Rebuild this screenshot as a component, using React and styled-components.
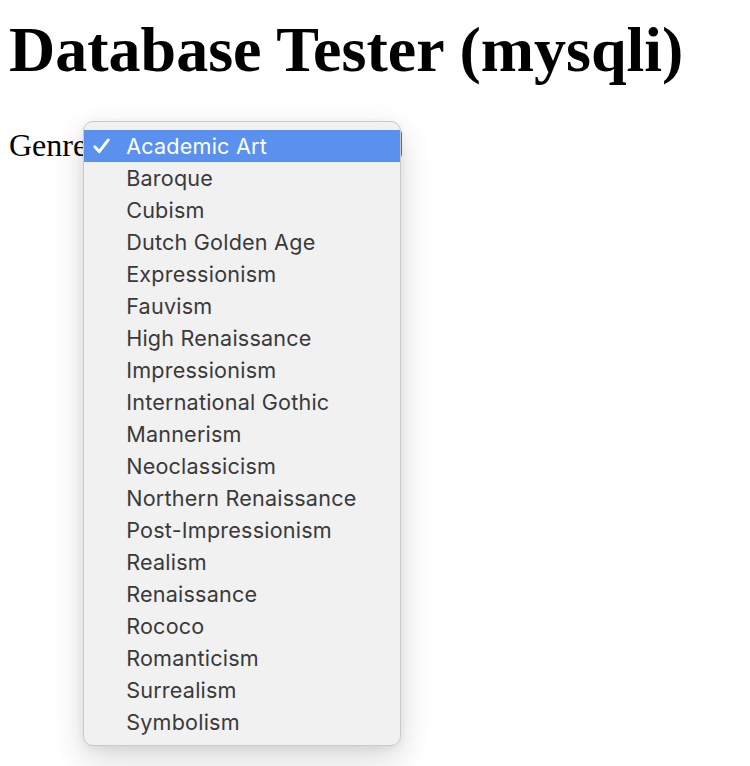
import React from "react";
import styled, { createGlobalStyle } from "styled-components";

const GlobalStyle = createGlobalStyle`
  html, body, #root { margin: 0; padding: 0; min-height: 100%; height: 100%; background: #ffffff; }
  body { font-family: "Liberation Serif", "Times New Roman", serif; color: #000; }
`;

const Page = styled.div`
  min-height: 766px;
  padding: 0 9px;
`;

const Heading = styled.h1`
  margin: 13px 0 40px;
  font-size: 64px;
  font-weight: 700;
  line-height: normal;
  white-space: nowrap;
`;

const Row = styled.div`
  display: flex;
  align-items: flex-start;
`;

const Label = styled.span`
  font-size: 32px;
  line-height: normal;
`;

const SelectWrap = styled.div`
  position: relative;
  margin-left: -4px;
  margin-top: 1px;
  width: 319px;
  height: 32px;
`;

const SelectBox = styled.div`
  box-sizing: border-box;
  width: 100%;
  height: 100%;
  border-radius: 6px;
  background: #3f77de;
`;

const Menu = styled.ul`
  position: absolute;
  top: -7px;
  left: 0;
  z-index: 2;
  box-sizing: border-box;
  width: 318px;
  margin: 0;
  padding: 8px 0 7px;
  list-style: none;
  background: #f1f1f1;
  border: 1px solid #c9c9c9;
  border-radius: 10px;
  box-shadow: 0 12px 32px rgba(0, 0, 0, 0.16), 0 2px 8px rgba(0, 0, 0, 0.06);
`;

const Item = styled.li`
  display: flex;
  align-items: center;
  height: 32px;
  padding-left: 42px;
  position: relative;
  font-family: Inter, "Noto Sans", sans-serif;
  font-size: 21.6px;
  letter-spacing: 0.2px;
  color: ${(p) => (p.$selected ? "#ffffff" : "#3a3a3a")};
  background: ${(p) => (p.$selected ? "#5a91ee" : "transparent")};
  white-space: nowrap;
`;

const Check = styled.svg`
  position: absolute;
  left: 9px;
  top: 8px;
  width: 17px;
  height: 16px;
`;

const genres = [
  "Academic Art",
  "Baroque",
  "Cubism",
  "Dutch Golden Age",
  "Expressionism",
  "Fauvism",
  "High Renaissance",
  "Impressionism",
  "International Gothic",
  "Mannerism",
  "Neoclassicism",
  "Northern Renaissance",
  "Post-Impressionism",
  "Realism",
  "Renaissance",
  "Rococo",
  "Romanticism",
  "Surrealism",
  "Symbolism",
];

export default function App() {
  return (
    <>
      <GlobalStyle />
      <Page>
        <Heading>Database Tester (mysqli)</Heading>
        <Row>
          <Label>Genre </Label>
          <SelectWrap>
            <SelectBox />
            <Menu>
              {genres.map((g, i) => (
                <Item key={g} $selected={i === 0}>
                  {i === 0 && (
                    <Check viewBox="0 0 17 16">
                      <polyline
                        points="1.8,8.8 6.2,13.6 15.2,2"
                        fill="none"
                        stroke="#ffffff"
                        strokeWidth="2.9"
                        strokeLinecap="round"
                        strokeLinejoin="round"
                      />
                    </Check>
                  )}
                  {g}
                </Item>
              ))}
            </Menu>
          </SelectWrap>
        </Row>
      </Page>
    </>
  );
}
